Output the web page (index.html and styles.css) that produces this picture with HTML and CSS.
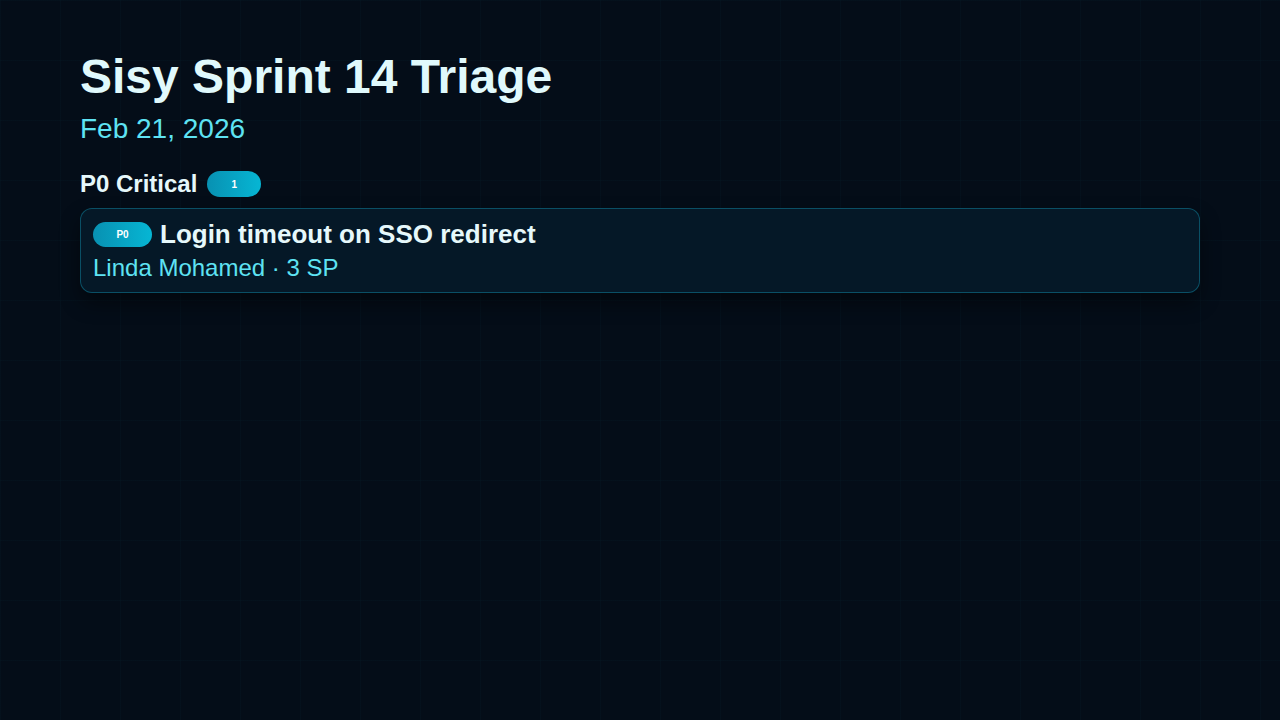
FILE: index.html
```html
<!DOCTYPE html>
<html lang="en">
<head>
<meta charset="utf-8">
<title>Sisy Sprint 14 Triage</title>
<link rel="stylesheet" href="styles.css">
</head>
<body>
<main class="page">
  <header class="head">
    <h1 class="title">Sisy Sprint 14 Triage</h1>
    <div class="date">Feb 21, 2026</div>
  </header>
  <section class="group">
    <div class="group-head">
      <h2 class="group-title">P0 Critical</h2>
      <span class="pill pill-count">1</span>
    </div>
    <div class="card">
      <div class="card-top">
        <span class="pill pill-pri">P0</span>
        <span class="card-title">Login timeout on SSO redirect</span>
      </div>
      <div class="card-meta">Linda Mohamed · 3 SP</div>
    </div>
  </section>
</main>
</body>
</html>
```
FILE: styles.css
```css
html, body {
  margin: 0;
  padding: 0;
}
body {
  width: 1280px;
  height: 720px;
  overflow: hidden;
  background-color: #040d18;
  background-image:
    linear-gradient(rgba(34, 211, 238, 0.018) 1px, transparent 1px),
    linear-gradient(90deg, rgba(34, 211, 238, 0.018) 1px, transparent 1px);
  background-size: 60px 60px;
  background-position: 0 0;
  font-family: "Liberation Sans", Arial, sans-serif;
  color: #e0f7fb;
}
.page {
  padding: 49px 80px 0 80px;
}
.head {
  display: flex;
  flex-direction: column;
}
.title {
  margin: 0;
  font-size: 48px;
  line-height: 55px;
  font-weight: 700;
  color: #e0f9fc;
}
.date {
  margin-top: 9px;
  font-size: 28px;
  line-height: 32px;
  color: #5ee3f3;
}
.group {
  margin-top: 26px;
}
.group-head {
  display: flex;
  align-items: center;
  gap: 10px;
  height: 26px;
}
.group-title {
  margin: 0;
  font-size: 24px;
  line-height: 26px;
  font-weight: 700;
  color: #e6f8fb;
}
.pill {
  display: inline-flex;
  align-items: center;
  justify-content: center;
  border-radius: 13px;
  background: linear-gradient(90deg, #0891b2, #06b6d4);
  color: #ffffff;
  font-size: 10px;
  font-weight: 700;
}
.pill-count {
  width: 54px;
  height: 26px;
}
.pill-pri {
  width: 59px;
  height: 25px;
  border-radius: 12.5px;
  flex: none;
}
.card {
  margin-top: 11px;
  border: 1px solid rgba(14, 116, 144, 0.6);
  border-radius: 12px;
  background: #051827;
  padding: 12px 12px 11px 12px;
  box-shadow: 0 10px 20px rgba(0, 0, 0, 0.45);
}
.card-top {
  display: flex;
  align-items: center;
  gap: 8px;
  height: 26px;
}
.card-title {
  font-size: 26px;
  line-height: 26px;
  font-weight: 700;
  color: #e6f8fb;
}
.card-meta {
  margin-top: 8px;
  font-size: 24px;
  line-height: 26px;
  color: #5ee3f3;
}
```
